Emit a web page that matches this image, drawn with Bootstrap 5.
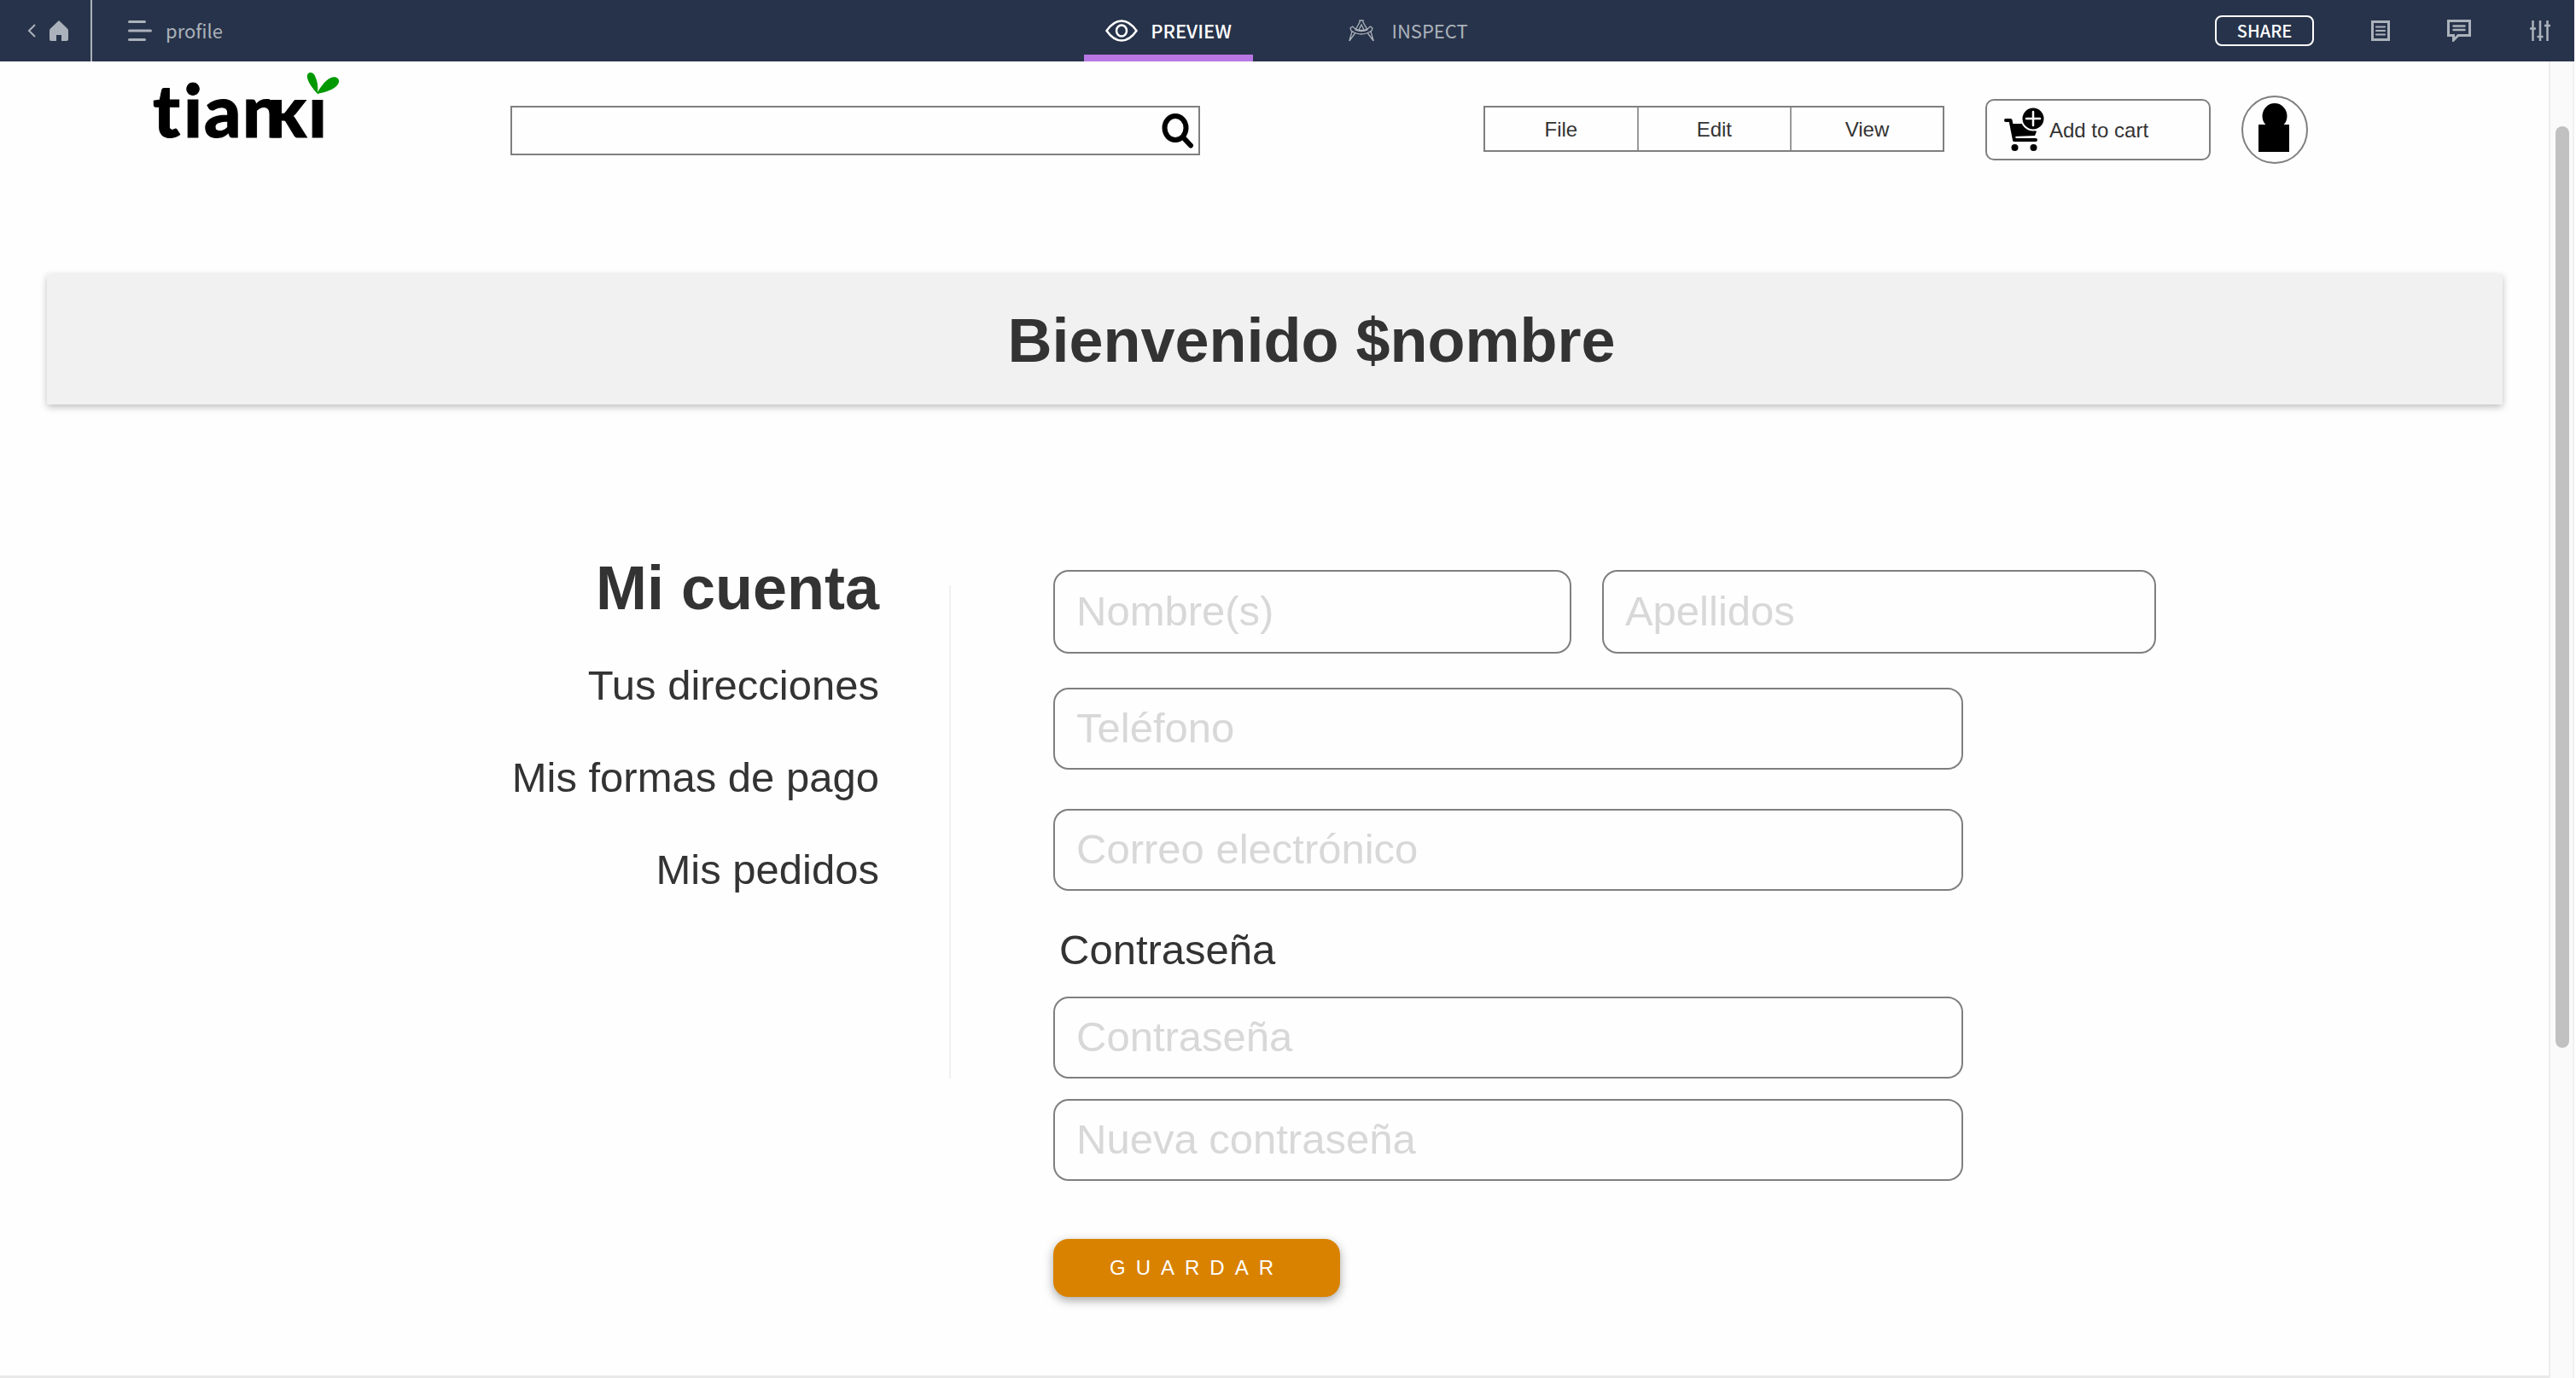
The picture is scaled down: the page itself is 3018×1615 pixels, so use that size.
<!DOCTYPE html>
<html lang="es">
<head>
<meta charset="utf-8">
<meta name="viewport" content="width=device-width, initial-scale=1">
<title>profile</title>
<link href="https://cdn.jsdelivr.net/npm/bootstrap@5.3.0/dist/css/bootstrap.min.css" rel="stylesheet">
<style>
  body { font-family: "Liberation Sans", Arial, sans-serif; font-size: 24px; line-height: 32px; color: #333; background: #fff; }
  .app-shell { min-height: 100vh; padding-right: 2px; }

  /* Viewer toolbar */
  .topbar { height: 72px; background: #27334a; color: #abb2bb; font-family: "Noto Sans CJK JP", "Noto Sans", sans-serif; font-size: 22px; line-height: 32px; }
  .topbar span { padding-bottom: 2px; }
  .topbar a { color: inherit; text-decoration: none; }
  .home-link { width: 108px; border-right: 2px solid #abb2bb; gap: 16px; padding-right: 26px; }
  .page-link-name { gap: 16px; padding-left: 42px; }
  .view-tabs { gap: 86px; }
  .view-tab { width: 198px; justify-content: center; gap: 15px; border-top: 8px solid transparent; border-bottom: 8px solid transparent; }
  .view-tab.active { color: #fff; font-weight: 500; border-bottom-color: #b877e5; }
  .view-tab.inspect-tab { width: 192px; gap: 20px; }
  .top-actions { gap: 67px; }
  .top-actions > :last-child { margin-right: 28px; }
  .share-btn { width: 116px; height: 36px; padding: 0; border: 2px solid #fff; border-radius: 8px; color: #fff; font: 500 20px/30px "Noto Sans CJK JP", "Noto Sans", sans-serif; }
  .icon-btn { padding: 0; border: 0; background: none; color: inherit; display: flex; }

  /* Decorative scroll track */
  .canvas { border-bottom: 3px solid #e8e8e8; background: #fefefe; }
  .track { width: 30px; padding: 76px 4px 0 6px; background: #fafafa; border-left: 2px solid #ececec; border-right: 2px solid #f0f0f0; }
  .thumb { height: 1080px; border-radius: 8px; background: #c1c1c1; }

  /* Shop header */
  .shop-header { height: 160px; padding: 0 282px 0 172px; }
  .logo-type { font: 900 85px Lato, sans-serif; stroke: #000; stroke-width: 1; }
  .search-box { height: 58px; border: 2px solid #7f7f7f; margin: 2px 332px 0 186px; padding-right: 5px; }
  .search-box input { border: 0; outline: 0; background: none; min-width: 0; padding: 0 16px; }
  .menu-group { width: 540px; height: 54px; border: 2px solid #7f7f7f; margin: 0 48px 2px 0; }
  .menu-group button { border: 0; background: none; color: #333; padding: 2px 0 0; }
  .menu-group button + button { border-left: 2px solid #999; }
  .cart-btn { width: 264px; height: 72px; margin-right: 36px; padding: 0 20px; gap: 6px; border: 2px solid #7f7f7f; border-radius: 10px; background: none; color: #333; }
  .cart-btn span { padding-top: 2px; }

  .welcome { margin: 89px 54px 0 55px; padding: 38px 0 35px 86px; background: #f1f1f1; box-shadow: 0 3px 8px rgba(0,0,0,.25); text-align: center; }
  .title-lg { font-size: 72px; line-height: 80px; font-weight: 700; margin: 0; }

  /* Account area */
  .account { padding: 175px 460px 0 0; }
  .side-menu { width: 1030px; text-align: right; font-size: 49px; line-height: 60px; }
  .side-menu ul { margin: 44px 0 0; gap: 48px; }
  .side-menu a { color: inherit; text-decoration: none; }
  .rule { width: 2px; height: 578px; margin: 37px 120px 0 82px; background: #f0f0f0; }
  .profile-form { padding-top: 19px; }
  .profile-form .form-control { height: 96px; padding: 0 25px 2px; border: 2px solid #7f7f7f; border-radius: 18px; font-size: 49px; line-height: 60px; color: #333; background: #fefefe; }
  .profile-form .form-control::placeholder { color: #d8d8d8; opacity: 1; }
  .profile-form .name-row { gap: 36px; margin-bottom: 40px; }
  .profile-form .name-row .form-control { height: 98px; }
  .profile-form .name-row .first-name { flex: 604 1 0; }
  .profile-form .name-row .last-name { flex: 650 1 0; }
  .narrow { width: 82.5%; }
  .email-field { margin-top: 46px; }
  .field-label { font-size: 49px; line-height: 60px; padding-left: 7px; margin: 39px 0 25px; }
  .save-btn { width: 336px; height: 68px; margin-top: 68px; border: 0; border-radius: 18px; background: #d98200; color: #fff; font-size: 24px; letter-spacing: 12px; padding: 0; box-shadow: 0 4px 12px rgba(0,0,0,.35); }
</style>
</head>
<body>
<div class="app-shell d-flex flex-column">
  <nav class="topbar d-flex align-items-stretch" aria-label="Viewer">
    <div class="d-flex flex-fill w-50">
      <a href="#" class="home-link d-flex align-items-center justify-content-end" aria-label="Home">
        <svg width="10" height="16" viewBox="0 0 10 16" fill="none" stroke="currentColor" stroke-width="2"><path d="M9 1 2 8l7 7"/></svg>
        <svg width="22" height="24" viewBox="0 0 22 24" fill="currentColor"><path d="M11 0 21 9.500Q22 10.500 22 12V22Q22 24 20 24H14V17H8V24H2Q0 24 0 22V12Q0 10.500 1 9.500Z"/></svg>
      </a>
      <a href="#" class="page-link-name d-flex align-items-center">
        <svg width="28" height="24" viewBox="0 0 28 24" stroke="currentColor" stroke-width="3" stroke-linecap="round"><path d="M1.500 1.500h18M1.500 12h25M1.500 22.500h18"/></svg>
        <span>profile</span>
      </a>
    </div>
    <div class="view-tabs d-flex flex-shrink-0">
      <a href="#" class="view-tab active d-flex align-items-center" aria-current="page">
        <svg width="38" height="26" viewBox="0 0 38 26" fill="none" stroke="currentColor" stroke-width="2.500"><path d="M1.500 13C7 5 13 1.500 19 1.500S31 5 36.500 13C31 21 25 24.500 19 24.500S7 21 1.500 13Z"/><ellipse cx="19" cy="13" rx="6" ry="6.500"/></svg>
        <span>PREVIEW</span>
      </a>
      <a href="#" class="view-tab inspect-tab d-flex align-items-center">
        <svg width="30" height="26" viewBox="0 0 30 26" fill="none" stroke="currentColor" stroke-width="1.300"><path d="M13 1h4v2l5 9q-7 3-14 0l5-9ZM15 6l3 6q-3 1-6 0ZM2 10l2.500-2L8 11q7 3 14 0l3.500-3L28 10l-1 3q-12 8-24 0ZM4 14 .800 25M7.500 16 .800 25M26 14l3.200 11M22.500 16l6.700 9"/></svg>
        <span>INSPECT</span>
      </a>
    </div>
    <div class="top-actions d-flex flex-fill w-50 align-items-center justify-content-end">
      <button type="button" class="share-btn btn">SHARE</button>
      <button type="button" class="icon-btn" aria-label="Notes"><svg width="22" height="24" viewBox="0 0 22 24" fill="none" stroke="currentColor"><rect x="1.500" y="1.500" width="19" height="21" stroke-width="3"/><path d="M6 7.500h10M6 12h10M6 16.500h10" stroke-width="2.200" stroke-linecap="round"/></svg></button>
      <button type="button" class="icon-btn" aria-label="Comments"><svg width="30" height="26" viewBox="0 0 30 26" fill="none" stroke="currentColor" stroke-width="3"><path d="M1.500 1.500h25v17H13L7.500 24v-5.500h-6Z"/><path d="M7.500 7.500h13M7.500 12h13" stroke-width="2.500" stroke-linecap="round"/></svg></button>
      <button type="button" class="icon-btn" aria-label="Settings"><svg width="24" height="24" viewBox="0 0 24 24" fill="none" stroke="currentColor" stroke-width="2.500"><path d="M3.500 0v24M12 0v24M20.500 0v24M0 9.500h7M8.500 19h7M17 6h7"/></svg></button>
    </div>
  </nav>

  <div class="d-flex flex-fill">
    <main class="canvas flex-fill">
      <header class="shop-header d-flex align-items-center">
        <a href="#" class="flex-shrink-0 d-flex" aria-label="tianki">
          <svg width="240" height="160" viewBox="0 0 240 160">
            <clipPath id="capline"><path d="M0 0H144V45H240V100H0Z"/></clipPath>
            <text class="logo-type" x="7 43 67 112 141 189" y="89" clip-path="url(#capline)">tianki</text>
            <path fill="#090" d="M199 37C192 29 187 21 188 16C189 12 195 12 197 17C200 23 201 30 200 36C205 28 210 21 216 19C221 17 226 20 225 24C224 31 211 36 200 38Z"/>
          </svg>
        </a>
        <form class="search-box d-flex align-items-center flex-fill" role="search">
          <input type="search" class="flex-fill" aria-label="Buscar">
          <button type="button" class="icon-btn text-black" aria-label="Buscar"><svg width="38" height="42" viewBox="0 0 38 42" fill="none" stroke="currentColor" stroke-linecap="round"><ellipse cx="16" cy="18" rx="12.500" ry="14" stroke-width="6"/><path d="M27 31l7 7.500" stroke-width="6"/></svg></button>
        </form>
        <div class="menu-group d-flex" role="group" aria-label="Menu">
          <button type="button" class="flex-fill w-100">File</button>
          <button type="button" class="flex-fill w-100">Edit</button>
          <button type="button" class="flex-fill w-100">View</button>
        </div>
        <button type="button" class="cart-btn d-flex align-items-center">
          <svg width="47" height="52" viewBox="0 0 47 52"><path d="M2 15h5.500L12 38H37" fill="none" stroke="#000" stroke-width="4" stroke-linecap="round" stroke-linejoin="round"/><path d="M8 19h16l14 9-2 5-25 1Z"/><circle cx="12.500" cy="47" r="4"/><circle cx="34.500" cy="47" r="4"/><circle cx="34" cy="13" r="13.500" stroke="#fefefe" stroke-width="2"/><path d="M34 5v16M26 13h16" stroke="#fff" stroke-width="2.500" stroke-linecap="round"/></svg>
          <span>Add to cart</span>
        </button>
        <button type="button" class="icon-btn flex-shrink-0" aria-label="Perfil">
          <svg width="78" height="80" viewBox="0 0 78 80"><ellipse cx="39" cy="40" rx="38" ry="39" fill="none" stroke="#7f7f7f" stroke-width="2"/><ellipse cx="39" cy="24" rx="14.500" ry="15"/><path d="M20 34h36v32H20Z"/></svg>
        </button>
      </header>

      <section class="welcome"><h1 class="title-lg">Bienvenido $nombre</h1></section>

      <section class="account d-flex align-items-start">
        <aside class="side-menu flex-shrink-0">
          <h2 class="title-lg">Mi cuenta</h2>
          <ul class="list-unstyled d-flex flex-column">
            <li><a href="#">Tus direcciones</a></li>
            <li><a href="#">Mis formas de pago</a></li>
            <li><a href="#">Mis pedidos</a></li>
          </ul>
        </aside>
        <div class="rule flex-shrink-0"></div>
        <form class="profile-form flex-fill">
          <div class="name-row d-flex">
            <input type="text" class="form-control first-name" placeholder="Nombre(s)" aria-label="Nombre(s)">
            <input type="text" class="form-control last-name" placeholder="Apellidos" aria-label="Apellidos">
          </div>
          <div class="narrow">
            <input type="tel" class="form-control" placeholder="Teléfono" aria-label="Teléfono">
            <input type="email" class="form-control email-field" placeholder="Correo electrónico" aria-label="Correo electrónico">
            <label class="field-label d-block" for="current-password">Contraseña</label>
            <input type="password" id="current-password" class="form-control mb-4" placeholder="Contraseña">
            <input type="password" class="form-control" placeholder="Nueva contraseña" aria-label="Nueva contraseña">
            <button type="button" class="save-btn">GUARDAR</button>
          </div>
        </form>
      </section>
    </main>
    <div class="track flex-shrink-0" aria-hidden="true"><div class="thumb"></div></div>
  </div>
</div>
<script src="https://cdn.jsdelivr.net/npm/bootstrap@5.3.0/dist/js/bootstrap.bundle.min.js"></script>
</body>
</html>
